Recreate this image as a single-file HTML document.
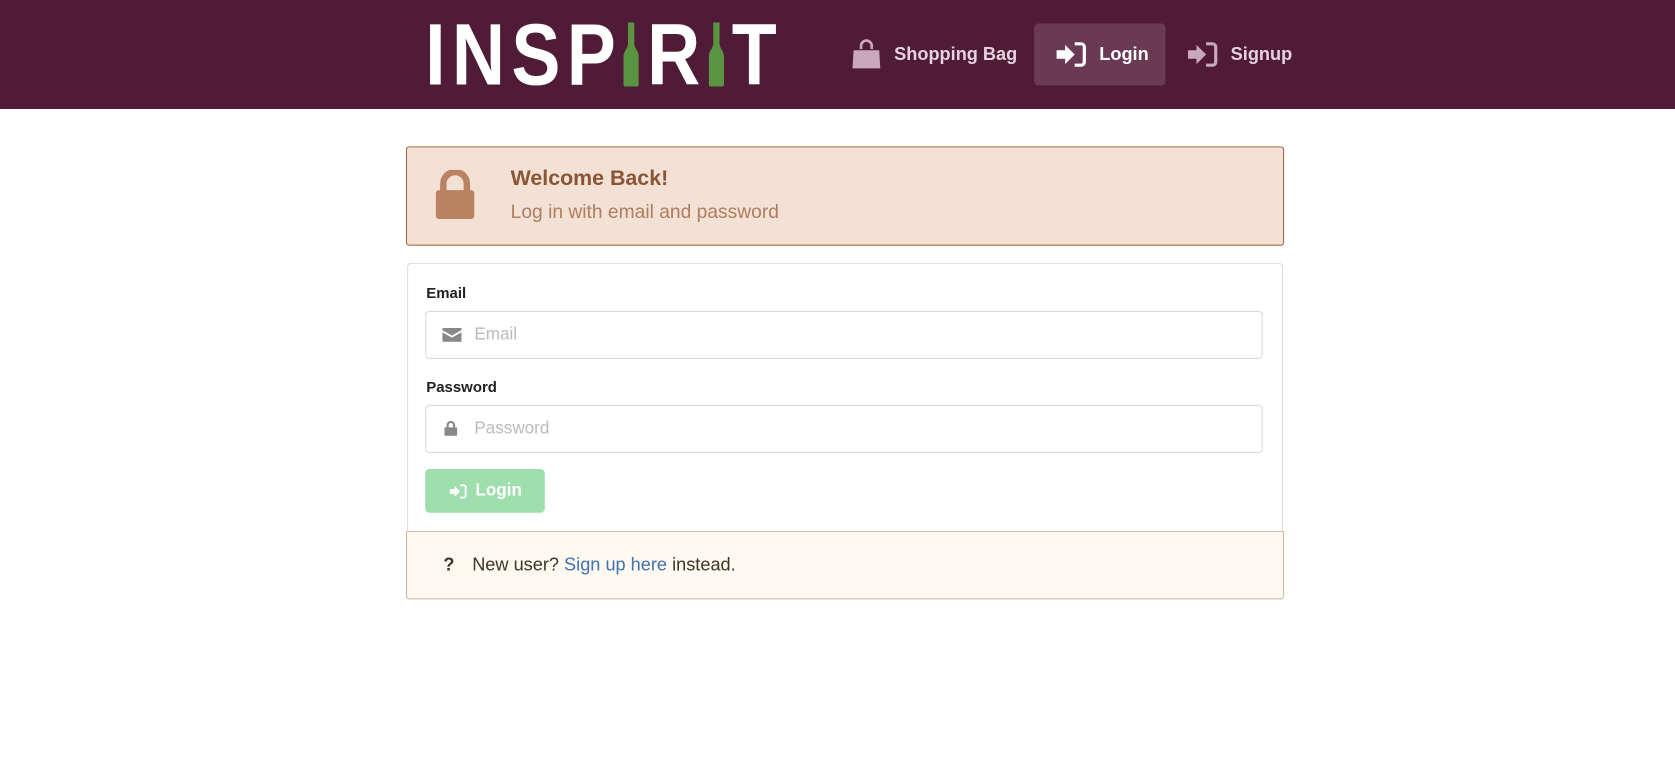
<!DOCTYPE html>
<html><head><meta charset="utf-8"><style>
body{margin:0;background:#fff;font-family:"Liberation Sans",sans-serif;width:1675px;height:759px;overflow:hidden}
#w{width:1568px;height:711px;transform:scale(1.0683);transform-origin:0 0;position:relative}
.nav{height:102px;background:#4f1b36;position:relative}
.logo{position:absolute;left:398px;top:12px;height:80px;display:flex;align-items:flex-start;color:#fff;font-weight:bold;font-size:82px;line-height:80px;letter-spacing:7px;transform:scaleX(0.84);transform-origin:left}
.bottle{display:inline-block;width:17px;height:60px;margin:9px 9px 0 2px;flex:none}
.ni{position:absolute;top:22px;height:58px;display:flex;align-items:center;font-size:17px;font-weight:bold;color:#e6d3dd}
.card{position:absolute;left:380px;width:820px}
.msg{top:137px;height:91px;background:#f2e1d4;border:1px solid #a7683f;border-radius:3px}
.form{top:246px;left:381px;width:818px;height:251px;border:1px solid #ddd;border-bottom:none;border-radius:4px 4px 0 0}
.lbl{position:absolute;left:17px;font-size:14px;font-weight:bold;color:#222}
.inp{position:absolute;left:16px;width:782px;height:43px;border:1px solid #d9d9d9;border-radius:4px;color:#bbb;font-size:16px;line-height:43px;text-indent:45px}
.btn{position:absolute;left:16px;top:192px;width:112px;height:41px;background:#9fdfae;border-radius:4px;color:#fff;font-weight:bold;font-size:16px;line-height:41px;text-indent:47px}
.foot{top:497px;height:62px;background:#fff9f2;border:1px solid #c9bba4;border-radius:0 0 3px 3px;font-size:17px;color:#3d3522;line-height:62px}
</style></head><body><div id="w">
<div class="nav">
<div class="logo">INSP<svg class="bottle" viewBox="0 0 17 60"><path d="M5 0h7v20c0 4 5 7 5 12v26c0 1-1 2-2 2H2c-1 0-2-1-2-2V32c0-5 5-8 5-12z" fill="#5a9440"/></svg>R<svg class="bottle" viewBox="0 0 17 60"><path d="M5 0h7v20c0 4 5 7 5 12v26c0 1-1 2-2 2H2c-1 0-2-1-2-2V32c0-5 5-8 5-12z" fill="#5a9440"/></svg>T</div>
<div class="ni" style="left:796px"><svg width="30" height="30" viewBox="0 0 30 30" style="margin-right:11px"><path d="M10 10V7a5 5 0 0 1 10 0v3" stroke="#c9a8b9" stroke-width="2.5" fill="none"/><path d="M3 11h24l1 17H2z" fill="#c9a8b9"/></svg>Shopping Bag</div>
<div style="position:absolute;left:968px;top:22px;width:123px;height:58px;background:#6a3a54;border-radius:4px"></div>
<div class="ni" style="left:989px;color:#fff"><svg width="28" height="24" viewBox="0 0 28 24" style="margin-right:12px"><path d="M0 8h8V3l9 9-9 9v-5H0z" fill="#fff"/><path d="M17 2h6a3 3 0 0 1 3 3v14a3 3 0 0 1-3 3h-6" stroke="#fff" stroke-width="3" fill="none"/></svg>Login</div>
<div class="ni" style="left:1112px"><svg width="28" height="24" viewBox="0 0 28 24" style="margin-right:12px"><path d="M0 8h8V3l9 9-9 9v-5H0z" fill="#c9a8b9"/><path d="M17 2h6a3 3 0 0 1 3 3v14a3 3 0 0 1-3 3h-6" stroke="#c9a8b9" stroke-width="3" fill="none"/></svg>Signup</div>
</div>
<div class="card msg">
<svg style="position:absolute;left:26px;top:21px" width="38" height="46" viewBox="0 0 38 46"><path d="M8 20v-7a11 11 0 0 1 22 0v7" stroke="#b98261" stroke-width="6" fill="none"/><rect x="1" y="19" width="36" height="27" rx="3" fill="#b98261"/></svg>
<div style="position:absolute;left:97px;top:18px;font-size:20px;font-weight:bold;color:#8a5535">Welcome Back!</div>
<div style="position:absolute;left:97px;top:50px;font-size:18px;color:#b07d5e">Log in with email and password</div>
</div>
<div class="card form">
<div class="lbl" style="top:19px">Email</div>
<div class="inp" style="top:44px">Email<svg style="position:absolute;left:15px;top:15px" width="18" height="13" viewBox="0 0 18 13"><path d="M0 0h18v2L9 7 0 2z M0 4l9 5 9-5v9H0z" fill="#888"/></svg></div>
<div class="lbl" style="top:107px">Password</div>
<div class="inp" style="top:132px">Password<svg style="position:absolute;left:17px;top:14px" width="12" height="14" viewBox="0 0 12 14"><path d="M3 6V4a3 3 0 0 1 6 0v2" stroke="#888" stroke-width="2" fill="none"/><rect x="0" y="6" width="12" height="8" rx="1" fill="#888"/></svg></div>
<div class="btn"><svg style="position:absolute;left:23px;top:14px" width="16" height="14" viewBox="0 0 28 24"><path d="M0 8h8V3l9 9-9 9v-5H0z" fill="#fff"/><path d="M17 2h6a3 3 0 0 1 3 3v14a3 3 0 0 1-3 3h-6" stroke="#fff" stroke-width="3" fill="none"/></svg>Login</div>
</div>
<div class="card foot"><b style="position:absolute;left:34px;font-size:17px">?</b><span style="position:absolute;left:61px">New user? <span style="color:#3f72b0">Sign up here</span> instead.</span></div>
</div></body></html>
